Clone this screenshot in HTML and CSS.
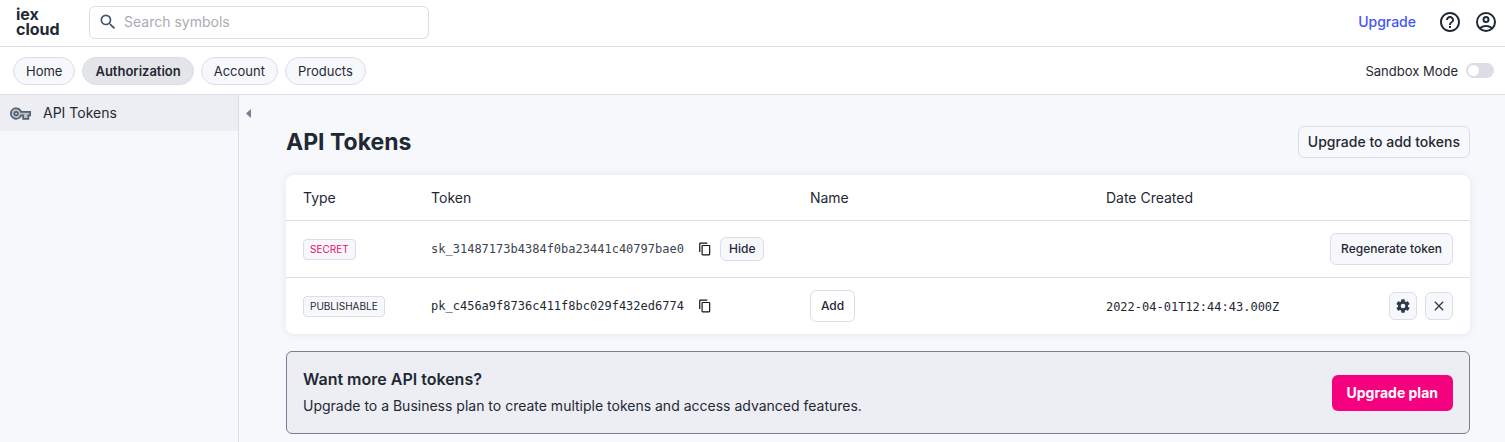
FILE: index.html
```html
<!DOCTYPE html>
<html lang="en">
<head>
<meta charset="utf-8">
<meta name="viewport" content="width=device-width, initial-scale=1">
<title>API Tokens</title>
<link rel="stylesheet" href="styles.css">
</head>
<body>
<header class="topbar">
  <a class="logo" href="#"><span>iex</span><span>cloud</span></a>
  <label class="search">
    <svg class="search-icon" viewBox="0 0 24 24" aria-hidden="true"><path d="M15.5 14h-.79l-.28-.27A6.47 6.47 0 0 0 16 9.5 6.5 6.5 0 1 0 9.5 16c1.61 0 3.09-.59 4.23-1.57l.27.28v.79l5 4.99L20.49 19l-4.99-5zm-6 0C7.01 14 5 11.99 5 9.5S7.01 5 9.5 5 14 7.01 14 9.5 11.99 14 9.5 14z"/></svg>
    <input class="search-input" type="text" placeholder="Search symbols" aria-label="Search symbols">
  </label>
  <div class="top-actions">
    <a class="upgrade-link" href="#">Upgrade</a>
    <button class="icon-button" type="button" aria-label="Help"><svg viewBox="0 0 24 24"><path d="M11 18h2v-2h-2v2zm1-16C6.48 2 2 6.48 2 12s4.480 10 10 10 10-4.480 10-10S17.520 2 12 2zm0 18c-4.410 0-8-3.590-8-8s3.590-8 8-8 8 3.590 8 8-3.590 8-8 8zm0-14c-2.210 0-4 1.790-4 4h2c0-1.100.9-2 2-2s2 .9 2 2c0 2-3 1.750-3 5h2c0-2.250 3-2.500 3-5 0-2.210-1.790-4-4-4z"/></svg></button>
    <button class="icon-button" type="button" aria-label="User account"><svg viewBox="0 0 24 24"><path fill-rule="evenodd" d="M12 2a10 10 0 1 0 0 20 10 10 0 0 0 0-20zM7.350 18.500C8.660 17.560 10.260 17 12 17s3.340.56 4.650 1.500A7.960 7.960 0 0 1 12 20a7.960 7.960 0 0 1-4.650-1.500zm10.790-1.380A9.950 9.950 0 0 0 12 15a9.950 9.950 0 0 0-6.140 2.120A8 8 0 1 1 20 12a7.950 7.950 0 0 1-1.860 5.120zM12 6a3.500 3.500 0 1 0 0 7 3.500 3.500 0 0 0 0-7zm0 5a1.500 1.500 0 1 1 0-3 1.500 1.500 0 0 1 0 3z"/></svg></button>
  </div>
</header>
<nav class="subnav">
  <a class="pill" href="#">Home</a>
  <a class="pill pill-active" href="#" aria-current="page">Authorization</a>
  <a class="pill" href="#">Account</a>
  <a class="pill" href="#">Products</a>
  <label class="sandbox">Sandbox Mode <input class="switch" type="checkbox" role="switch"></label>
</nav>
<div class="layout">
  <aside class="sidebar">
    <a class="side-link" href="#"><svg class="key-icon" viewBox="0 0 24 24" aria-hidden="true"><path class="key-body" d="M7 6a6 6 0 1 0 5.650 8H15v4h6v-4h2v-4H12.650A6 6 0 0 0 7 6z"/><circle class="key-hole" cx="7" cy="12" r="2"/></svg>API Tokens</a>
  </aside>
  <main class="main">
    <button class="collapse" type="button" aria-label="Collapse sidebar"><svg viewBox="0 0 5 9"><path d="M5 0v9L0 4.500z"/></svg></button>
    <div class="content">
      <div class="heading">
        <h1 class="title">API Tokens</h1>
        <button class="button button-large" type="button">Upgrade to add tokens</button>
      </div>
      <table class="tokens">
        <colgroup><col class="col-type"><col class="col-token"><col class="col-name"><col class="col-date"><col class="col-actions"></colgroup>
        <thead>
          <tr><th scope="col">Type</th><th scope="col">Token</th><th scope="col">Name</th><th scope="col">Date Created</th><td></td></tr>
        </thead>
        <tbody>
          <tr>
            <td><span class="tag tag-secret">SECRET</span></td>
            <td><div class="token"><code class="mono mono-muted">sk_31487173b4384f0ba23441c40797bae0</code><button class="copy" type="button" aria-label="Copy secret token"><svg viewBox="0 0 24 24"><path d="M16 1H4a2 2 0 0 0-2 2v14h2V3h12V1zm3 4H8a2 2 0 0 0-2 2v14c0 1.100.9 2 2 2h11a2 2 0 0 0 2-2V7a2 2 0 0 0-2-2zm0 16H8V7h11v14z"/></svg></button><button class="button button-small" type="button">Hide</button></div></td>
            <td></td>
            <td></td>
            <td><div class="actions"><button class="button button-tinted" type="button">Regenerate token</button></div></td>
          </tr>
          <tr>
            <td><span class="tag">PUBLISHABLE</span></td>
            <td><div class="token"><code class="mono">pk_c456a9f8736c411f8bc029f432ed6774</code><button class="copy" type="button" aria-label="Copy publishable token"><svg viewBox="0 0 24 24"><path d="M16 1H4a2 2 0 0 0-2 2v14h2V3h12V1zm3 4H8a2 2 0 0 0-2 2v14c0 1.100.9 2 2 2h11a2 2 0 0 0 2-2V7a2 2 0 0 0-2-2zm0 16H8V7h11v14z"/></svg></button></div></td>
            <td><button class="button" type="button">Add</button></td>
            <td><time class="mono">2022-04-01T12:44:43.000Z</time></td>
            <td><div class="actions"><button class="square" type="button" aria-label="Token settings"><svg viewBox="0 0 24 24"><path fill-rule="evenodd" d="M19.430 12.980c.04-.32.07-.64.07-.98s-.03-.66-.07-.98l2.110-1.650a.5.5 0 0 0 .12-.64l-2-3.460a.5.5 0 0 0-.61-.22l-2.490 1a7.300 7.300 0 0 0-1.690-.98l-.38-2.650A.49.49 0 0 0 14 2h-4a.49.49 0 0 0-.49.42l-.38 2.650c-.61.25-1.170.59-1.690.98l-2.490-1a.49.49 0 0 0-.61.22l-2 3.460a.49.49 0 0 0 .12.64l2.110 1.650a7.900 7.900 0 0 0 0 1.960l-2.110 1.650a.5.5 0 0 0-.12.64l2 3.460c.12.22.39.3.61.22l2.490-1c.52.4 1.080.73 1.690.98l.38 2.650c.03.24.24.42.49.42h4c.25 0 .46-.18.49-.42l.38-2.650c.61-.25 1.170-.59 1.690-.98l2.490 1c.23.09.49 0 .61-.22l2-3.460a.5.5 0 0 0-.12-.64l-2.110-1.650zM12 15.500a3.500 3.500 0 1 1 0-7 3.500 3.500 0 0 1 0 7z"/></svg></button><button class="square" type="button" aria-label="Delete token"><svg viewBox="0 0 24 24"><path d="M19 6.410 17.590 5 12 10.590 6.410 5 5 6.410 10.590 12 5 17.590 6.410 19 12 13.410 17.590 19 19 17.590 13.410 12z"/></svg></button></div></td>
          </tr>
        </tbody>
      </table>
      <section class="banner">
        <div>
          <h2 class="banner-title">Want more API tokens?</h2>
          <p class="banner-text">Upgrade to a Business plan to create multiple tokens and access advanced features.</p>
        </div>
        <button class="cta" type="button">Upgrade plan</button>
      </section>
    </div>
  </main>
</div>
</body>
</html>
```
FILE: styles.css
```css
* { box-sizing: border-box; }
body {
  margin: 0;
  min-height: 100vh;
  display: flex;
  flex-direction: column;
  background: #f7f8fc;
  color: #1f2933;
  font: 14px/20px Inter, "Liberation Sans", sans-serif;
}
a { color: inherit; text-decoration: none; }
button { font: inherit; color: inherit; cursor: pointer; }
svg { display: block; fill: currentColor; }

.topbar {
  display: flex;
  align-items: center;
  height: 47px;
  padding: 0 8px 2px 16px;
  background: #fff;
  border-bottom: 1px solid #dcdde6;
}
.logo {
  display: flex;
  flex-direction: column;
  width: 73px;
  font-size: 16px;
  line-height: 15px;
  font-weight: 700;
}
.search {
  display: flex;
  align-items: center;
  gap: 6px;
  width: 340px;
  height: 33px;
  padding: 0 8px;
  border: 1px solid #dcdde6;
  border-radius: 6px;
}
.search-icon { width: 20px; height: 20px; color: #46566a; }
.search-input {
  flex: 1;
  min-width: 0;
  padding: 0;
  border: 0;
  outline: 0;
  background: none;
  color: inherit;
  font: inherit;
}
.search-input::placeholder { color: #a9adb3; }
.top-actions { display: flex; align-items: center; gap: 12px; margin-left: auto; }
.upgrade-link { margin-right: 10px; color: #4855f5; font-weight: 500; }
.icon-button { padding: 0; border: 0; background: none; }
.icon-button svg { width: 24px; height: 24px; }
.icon-button:last-child { margin-right: -1px; }

.subnav {
  display: flex;
  align-items: center;
  gap: 7px;
  height: 48px;
  padding: 0 11px 0 13px;
  background: #fff;
  border-bottom: 1px solid #dcdde6;
  font-size: 13px;
}
.pill {
  padding: 3px 12px;
  border: 1px solid #dcdde6;
  border-radius: 14px;
  background: #f7f8fc;
}
.pill-active { background: #e4e5e9; font-weight: 600; }
.sandbox { display: flex; align-items: center; gap: 8px; margin-left: auto; }
.switch {
  appearance: none;
  width: 28px;
  height: 15px;
  margin: 0;
  padding: 2px;
  border-radius: 8px;
  background: #dcdde6;
}
.switch::before {
  content: "";
  display: block;
  width: 11px;
  height: 11px;
  border-radius: 50%;
  background: #fff;
}
.switch:checked::before { margin-left: auto; }

.layout { display: flex; flex: 1; }
.sidebar { width: 239px; flex: none; border-right: 1px solid #dcdde6; }
.side-link {
  display: flex;
  align-items: center;
  gap: 12px;
  height: 36px;
  padding: 0 10px;
  background: #edeef3;
}
.key-icon { width: 21px; height: 21px; }
.key-body { fill: #b9c0ca; stroke: #536171; stroke-width: 2; }
.key-hole { fill: #edeef3; stroke: #536171; stroke-width: 2; }
.main { display: flex; align-items: flex-start; flex: 1; min-width: 0; }
.collapse { flex: none; width: 47px; padding: 14px 7px; border: 0; background: none; color: #728194; }
.collapse svg { width: 5px; height: 9px; }
.content { flex: 1; min-width: 0; padding: 31px 35px 8px 0; }
.heading { display: flex; align-items: center; justify-content: space-between; margin-bottom: 17px; }
.title { margin: 0; font-size: 23px; line-height: 32px; font-weight: 700; }

.button {
  height: 32px;
  padding: 0 10px;
  border: 1px solid #dcdde6;
  border-radius: 6px;
  background: transparent;
  font-size: 12px;
  font-weight: 500;
}
.button-large { padding: 0 9px; font-size: 14px; }
.button-tinted, .button-small { background: #f7f8fc; }
.button-small { height: 24px; padding: 0 8px; margin-left: 8px; }

.tokens {
  width: 100%;
  table-layout: fixed;
  border-spacing: 0;
  background: #fff;
  border-radius: 8px;
  box-shadow: 0 0 8px #e3e6ef;
}
.col-type { width: 10.9%; }
.col-token { width: 32%; }
.col-name { width: 25%; }
.col-date { width: 19%; }
.tokens th, .tokens td { height: 56px; padding: 0 16px; text-align: left; }
.tokens thead th, .tokens thead td { height: 46px; font-weight: 400; }
.tokens tbody tr:not(:last-child) td { height: 57px; }
.tokens thead th, .tokens thead td, .tokens tr:not(:last-child) td { border-bottom: 1px solid #dcdde6; }
.tokens th:first-child, .tokens td:first-child { padding-left: 17px; }
.tokens th:last-child, .tokens td:last-child { padding-right: 17px; }
.tag {
  display: inline-block;
  padding: 0 6px;
  border: 1px solid #dcdde6;
  border-radius: 4px;
  background: #f7f8fc;
  font-size: 10px;
  line-height: 19px;
  vertical-align: middle;
}
.tag-secret { color: #ee086f; }
.token { display: flex; align-items: center; white-space: nowrap; }
.mono { font-family: "DejaVu Sans Mono", monospace; font-size: 12px; }
.token .mono { min-width: 260px; }
.mono-muted { color: #3b4550; }
.copy { margin-left: 7px; padding: 0; border: 0; background: none; color: #111; }
.copy svg { width: 14px; height: 14px; }
.actions { display: flex; justify-content: flex-end; gap: 8px; white-space: nowrap; }
.square {
  display: grid;
  place-items: center;
  width: 28px;
  height: 28px;
  padding: 0;
  border: 1px solid #dcdde6;
  border-radius: 6px;
  background: #f7f8fc;
  color: #2d3b4b;
}
.square svg { width: 16px; height: 16px; }

.banner {
  display: flex;
  align-items: center;
  justify-content: space-between;
  gap: 16px;
  margin-top: 17px;
  padding: 16px;
  border: 1px solid #728194;
  border-radius: 6px;
  background: #edeef3;
}
.banner-title { margin: 0 0 5px; font-size: 16px; line-height: 22px; font-weight: 600; }
.banner-text { margin: 0; font-size: 14px; line-height: 22px; }
.cta {
  height: 36px;
  padding: 0 15px;
  border: 0;
  border-radius: 6px;
  background: #f5007e;
  color: #fff;
  font-weight: 700;
}
```
